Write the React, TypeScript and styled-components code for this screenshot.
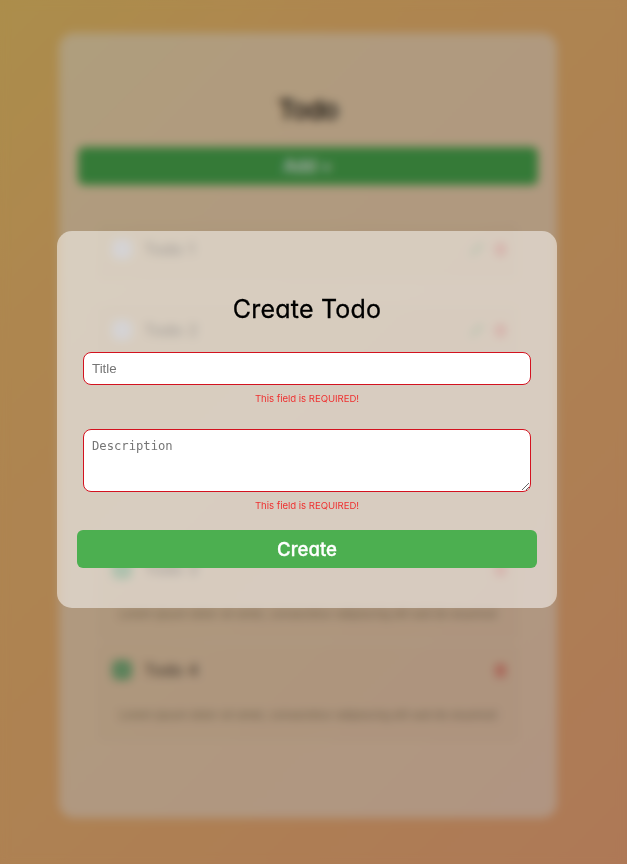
import React from 'react';
import styled, { createGlobalStyle } from 'styled-components';
import { Pencil, Trash2, Check } from 'lucide-react';

const GlobalStyle = createGlobalStyle`
  * { box-sizing: border-box; }
  html, body { margin: 0; padding: 0; overflow: hidden; }
  body {
    font-family: Inter, "Open Sans", sans-serif;
    font-feature-settings: 'cv11';
    color: #000;
  }
  h1, h2, p { margin: 0; font-weight: 400; }
`;

const Page = styled.div`
  height: 864px;
  padding: 33px 11px 0 0;
  display: flex;
  justify-content: center;
  align-items: flex-start;
  background: linear-gradient(135deg, #f6cb6c 0%, #fac072 25%, #fab977 60%, #faad7c 100%);
`;

const Board = styled.main`
  width: 498px;
  height: 785px;
  padding: 58px 19px 0;
  border-radius: 15px;
  background: rgba(255, 255, 255, 0.48);
`;

const BoardTitle = styled.h1`
  height: 56px;
  line-height: 38px;
  font-size: 26px;
  letter-spacing: -0.5px;
  -webkit-text-stroke: 0.4px #000;
  text-align: center;
`;

const Button = styled.button<{ $size?: number }>`
  display: flex;
  align-items: center;
  justify-content: center;
  width: 460px;
  height: 38px;
  padding: 0;
  border: 0;
  border-radius: 6px;
  background: #4caf50;
  color: #fff;
  font: 500 ${(p) => p.$size ?? 18.6}px/38px Inter, sans-serif;
  font-feature-settings: 'cv11';
  -webkit-text-stroke: 0.3px #fff;
`;

const List = styled.ul<{ $gap: number; $top: number }>`
  display: flex;
  flex-direction: column;
  gap: ${(p) => p.$gap}px;
  width: 420px;
  margin: ${(p) => p.$top}px auto 0;
  padding: 0;
  list-style: none;
`;

const Item = styled.li<{ $tall?: boolean }>`
  height: ${(p) => (p.$tall ? 96 : 56)}px;
  padding: 14px 11px 0 14px;
  border-radius: 6px;
  background: rgba(150, 120, 70, 0.03);
`;

const ItemHead = styled.div`
  display: flex;
  align-items: center;
  height: 22px;
  font-size: 16px;
`;

const Box = styled.span<{ $done?: boolean }>`
  display: flex;
  align-items: center;
  justify-content: center;
  width: 20px;
  height: 20px;
  margin-right: 12px;
  border-radius: 6px;
  color: #d9e2c4;
  background: ${(p) => (p.$done ? '#7fb87f' : '#f3eef2')};
`;

const ItemName = styled.span`
  flex: 1;
  color: #4d4336;
  letter-spacing: 0.3px;
`;

const Actions = styled.span`
  display: flex;
  gap: 11px;
`;

const Details = styled.p`
  margin: 26px 6px 0 7px;
  font-size: 11.2px;
  line-height: 16px;
  white-space: nowrap;
  color: #9c8768;
`;

const Overlay = styled.div`
  position: fixed;
  inset: 0;
  display: flex;
  align-items: flex-start;
  justify-content: center;
  padding: 231px 13px 0 0;
  background: rgba(0, 0, 0, 0.3);
  backdrop-filter: blur(5px);
`;

const Dialog = styled.form`
  display: flex;
  flex-direction: column;
  align-items: center;
  width: 500px;
  height: 377px;
  padding-top: 59px;
  border-radius: 15px;
  background: rgba(255, 255, 255, 0.5);
`;

const DialogTitle = styled.h2`
  height: 62px;
  line-height: 39px;
  font-size: 25px;
  letter-spacing: 0.2px;
  -webkit-text-stroke: 0.3px #000;
`;

const fieldLook = `
  display: block;
  width: 448px;
  border: 1px solid #d3121f;
  border-radius: 8px;
  outline: 0;
  background: #fff;
`;

const TitleInput = styled.input`
  ${fieldLook}
  height: 33px;
  padding: 0 8px;
  font: 13.333px "Liberation Sans", sans-serif;
`;

const DescriptionInput = styled.textarea`
  ${fieldLook}
  height: 63px;
  margin-top: 17px;
  padding: 9px 8px;
  font: 12.2px/15px "DejaVu Sans Mono", monospace;
`;

const ErrorText = styled.p<{ $space?: number }>`
  height: ${(p) => p.$space ?? 27}px;
  padding-top: 6px;
  font-size: 9.6px;
  line-height: 15px;
  letter-spacing: -0.04px;
  color: #ee3030;
`;

const Task = ({ name, done }: { name: string; done?: boolean }) => (
  <Item $tall={done}>
    <ItemHead>
      <Box $done={done}>{done && <Check size={12} />}</Box>
      <ItemName>{name}</ItemName>
      <Actions>
        {!done && <Pencil size={13} color="#68a968" />}
        <Trash2 size={13} color="#ed6258" strokeWidth={3} />
      </Actions>
    </ItemHead>
    {done && <Details>Lorem ipsum dolor sit amet, consectetur adipiscing elit sed do eiusmod</Details>}
  </Item>
);

export default function App() {
  return (
    <>
      <GlobalStyle />
      <Page>
        <Board>
          <BoardTitle>Todo</BoardTitle>
          <Button $size={17}>Add +</Button>
          <List $gap={25} $top={39}>
            <Task name="Todo 1" />
            <Task name="Todo 2" />
          </List>
          <List $gap={5} $top={183}>
            <Task name="Todo 3" done />
            <Task name="Todo 4" done />
          </List>
        </Board>
      </Page>
      <Overlay>
        <Dialog onSubmit={(e) => e.preventDefault()}>
          <DialogTitle>Create Todo</DialogTitle>
          <TitleInput placeholder="Title" />
          <ErrorText>This field is REQUIRED!</ErrorText>
          <DescriptionInput placeholder="Description" />
          <ErrorText $space={38}>This field is REQUIRED!</ErrorText>
          <Button type="submit">Create</Button>
        </Dialog>
      </Overlay>
    </>
  );
}
